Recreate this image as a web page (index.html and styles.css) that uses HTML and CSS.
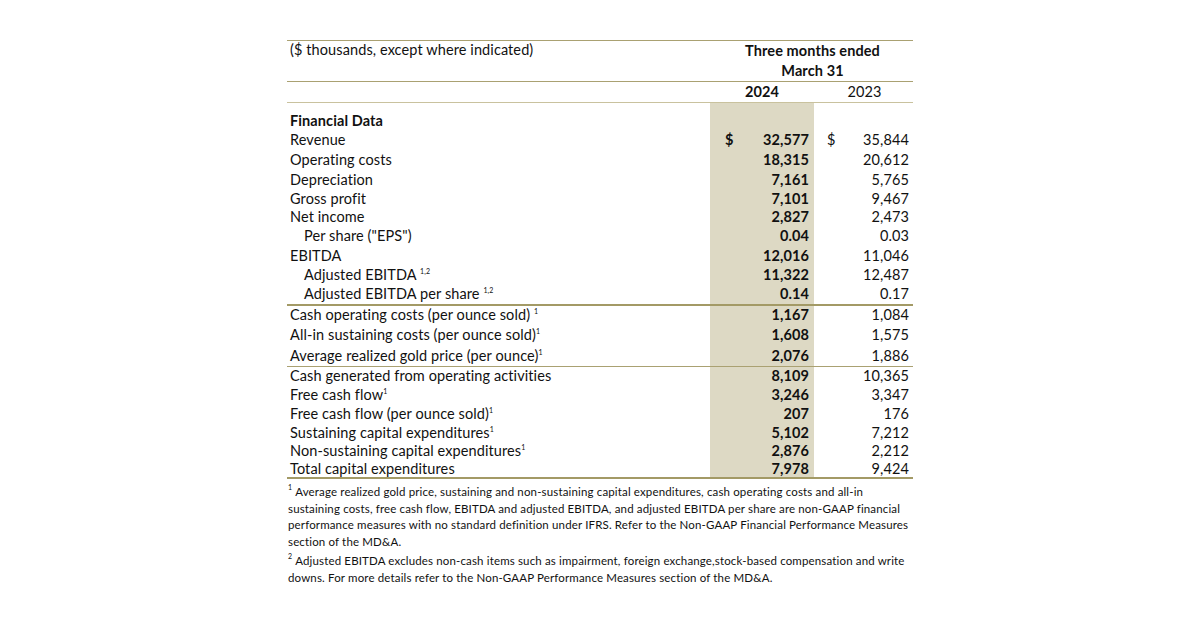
FILE: index.html
```html
<!DOCTYPE html>
<html lang="en">
<head>
    <meta charset="UTF-8">
    <meta name="viewport" content="width=device-width, initial-scale=1.0">
    <title>Financial Highlights</title>
    <link rel="stylesheet" href="styles.css">
</head>
<body>
    <div class="container">
        <table class="summary">
            <thead>
                <tr class="head-top">
                    <th class="label">($ thousands, except where indicated)</th>
                    <th class="period" colspan="2">Three months ended</th>
                </tr>
                <tr class="head-mid">
                    <th class="label"></th>
                    <th class="period" colspan="2">March 31</th>
                </tr>
                <tr class="head-years">
                    <th class="label"></th>
                    <th class="year current">2024</th>
                    <th class="year prior">2023</th>
                </tr>
            </thead>
            <tbody>
                <tr class="section">
                    <td class="label">Financial Data</td>
                    <td class="cur"></td>
                    <td class="prev"></td>
                </tr>
                <tr class="h20">
                    <td class="label">Revenue</td>
                    <td class="cur"><span class="sign">$</span>32,577</td>
                    <td class="prev"><span class="sign">$</span>35,844</td>
                </tr>
                <tr class="h20">
                    <td class="label">Operating costs</td>
                    <td class="cur">18,315</td>
                    <td class="prev">20,612</td>
                </tr>
                <tr class="h19">
                    <td class="label">Depreciation</td>
                    <td class="cur">7,161</td>
                    <td class="prev">5,765</td>
                </tr>
                <tr class="h19">
                    <td class="label">Gross profit</td>
                    <td class="cur">7,101</td>
                    <td class="prev">9,467</td>
                </tr>
                <tr class="h18">
                    <td class="label">Net income</td>
                    <td class="cur">2,827</td>
                    <td class="prev">2,473</td>
                </tr>
                <tr class="h20">
                    <td class="label indent">Per share ("EPS")</td>
                    <td class="cur">0.04</td>
                    <td class="prev">0.03</td>
                </tr>
                <tr class="h19">
                    <td class="label">EBITDA</td>
                    <td class="cur">12,016</td>
                    <td class="prev">11,046</td>
                </tr>
                <tr class="h19">
                    <td class="label indent">Adjusted EBITDA <sup>1,2</sup></td>
                    <td class="cur">11,322</td>
                    <td class="prev">12,487</td>
                </tr>
                <tr class="h20 rule-heavy">
                    <td class="label indent">Adjusted EBITDA per share <sup>1,2</sup></td>
                    <td class="cur">0.14</td>
                    <td class="prev">0.17</td>
                </tr>
                <tr class="h18">
                    <td class="label">Cash operating costs (per ounce sold) <sup>1</sup></td>
                    <td class="cur">1,167</td>
                    <td class="prev">1,084</td>
                </tr>
                <tr class="h22">
                    <td class="label">All-in sustaining costs (per ounce sold)<sup>1</sup></td>
                    <td class="cur">1,608</td>
                    <td class="prev">1,575</td>
                </tr>
                <tr class="h20 rule-light">
                    <td class="label">Average realized gold price (per ounce)<sup>1</sup></td>
                    <td class="cur">2,076</td>
                    <td class="prev">1,886</td>
                </tr>
                <tr class="h18">
                    <td class="label">Cash generated from operating activities</td>
                    <td class="cur">8,109</td>
                    <td class="prev">10,365</td>
                </tr>
                <tr class="h19">
                    <td class="label">Free cash flow<sup>1</sup></td>
                    <td class="cur">3,246</td>
                    <td class="prev">3,347</td>
                </tr>
                <tr class="h19">
                    <td class="label">Free cash flow (per ounce sold)<sup>1</sup></td>
                    <td class="cur">207</td>
                    <td class="prev">176</td>
                </tr>
                <tr class="h19">
                    <td class="label">Sustaining capital expenditures<sup>1</sup></td>
                    <td class="cur">5,102</td>
                    <td class="prev">7,212</td>
                </tr>
                <tr class="h18">
                    <td class="label">Non-sustaining capital expenditures<sup>1</sup></td>
                    <td class="cur">2,876</td>
                    <td class="prev">2,212</td>
                </tr>
                <tr class="h17 rule-heavy">
                    <td class="label">Total capital expenditures</td>
                    <td class="cur">7,978</td>
                    <td class="prev">9,424</td>
                </tr>
            </tbody>
        </table>

        <div class="notes">
            <p><sup>1</sup>Average realized gold price, sustaining and non-sustaining capital expenditures, cash operating costs and all-in sustaining costs, free cash flow, EBITDA and adjusted EBITDA, and adjusted EBITDA per share are non-GAAP financial performance measures with no standard definition under IFRS. Refer to the Non-GAAP Financial Performance Measures section of the MD&amp;A.</p>
            <p><sup>2</sup>Adjusted EBITDA excludes non-cash items such as impairment, foreign exchange,stock-based compensation and write downs. For more details refer to the Non-GAAP Performance Measures section of the MD&amp;A.</p>
        </div>
    </div>
</body>
</html>
```

FILE: styles.css
```css
body {
    margin: 0;
    background-color: #fff;
    color: #111;
    font-family: Lato, "Liberation Sans", sans-serif;
}

.container {
    width: 626px;
    margin: 40px auto 0;
}

.summary {
    width: 100%;
    border-collapse: separate;
    border-spacing: 0;
    border-top: 1px solid #aaa172;
    font-size: 14.5px;
    letter-spacing: 0.1px;
}

.summary th,
.summary td {
    padding: 0;
    white-space: nowrap;
}

.summary .label {
    text-align: left;
    font-weight: normal;
    padding-left: 3px;
}

.summary .label.indent {
    padding-left: 17px;
}

.head-top th,
.head-mid th,
.head-years th {
    line-height: 20px;
}

.head-top th.label {
    vertical-align: top;
    line-height: 18px;
}

.head-mid th {
    border-bottom: 1px solid #aaa172;
}

.head-years th {
    border-bottom: 1px solid #c9c29e;
}

.period {
    text-align: center;
    font-weight: bold;
    padding-left: 2px !important;
}

.year {
    text-align: center;
}

.year.current {
    font-weight: bold;
}

.year.prior {
    font-weight: normal;
    padding-left: 2px !important;
}

.cur {
    width: 84px;
    padding: 0 5px 0 15px !important;
    background-color: #ddd9c4;
    font-weight: bold;
    text-align: right;
}

.prev {
    width: 82px;
    padding: 0 4px 0 13px !important;
    text-align: right;
}

.sign {
    float: left;
}

.section td {
    height: 27px;
    vertical-align: bottom;
    line-height: 18px;
}

.section .label {
    font-weight: bold;
}

.h22 td { line-height: 22px; }
.h20 td { line-height: 20px; }
.h19 td { line-height: 19px; }
.h18 td { line-height: 18px; }
.h17 td { line-height: 17px; }

.rule-heavy td {
    border-bottom: 2px solid #a39a66;
}

.rule-light td {
    border-bottom: 1px solid #aaa172;
}

.summary sup {
    font-size: 7px;
    line-height: 0;
    vertical-align: 6px;
}

.notes {
    width: 622px;
    padding: 5px 0 0 1px;
    font-size: 11.5px;
    line-height: 16.5px;
    letter-spacing: 0.15px;
}

.notes p {
    margin: 0 0 3px;
}

.notes sup {
    display: inline-block;
    font-size: 7px;
    line-height: 7px;
    vertical-align: top;
    margin-right: 3px;
}
```
